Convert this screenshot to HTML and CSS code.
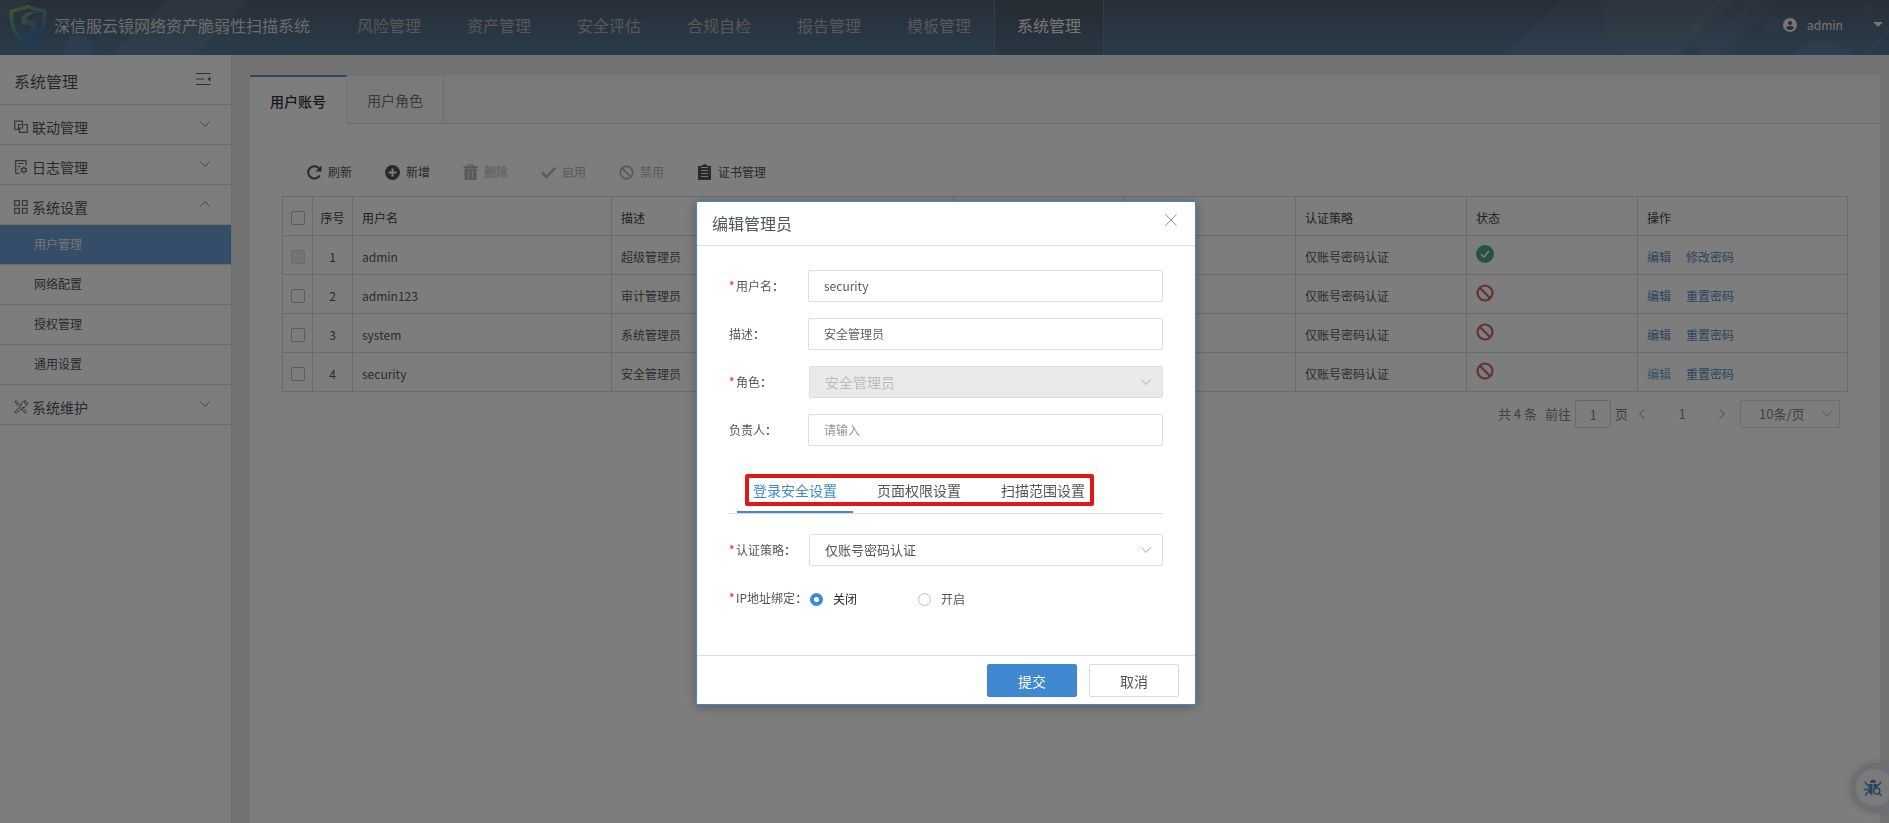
FILE: index.html
```html
<!DOCTYPE html>
<html lang="zh-CN">
<head>
<meta charset="utf-8">
<title>深信服云镜网络资产脆弱性扫描系统</title>
<link rel="stylesheet" href="styles.css">
</head>
<body>
<svg class="sprite" aria-hidden="true">
  <symbol id="down" viewBox="0 0 12 12"><path d="M1.500 3.500 6 8.500 10.500 3.500" fill="none" stroke="currentColor"/></symbol>
  <symbol id="ban" viewBox="0 0 18 18"><circle cx="9" cy="9" r="7.500" fill="none" stroke="currentColor" stroke-width="2.200"/><path d="M4 4 14 14" stroke="currentColor" stroke-width="2.200"/></symbol>
</svg>
<div class="page">
  <header class="header">
    <svg class="deco deco-left" width="260" height="55" viewBox="0 0 260 55" aria-hidden="true">
      <path d="M165 0H250L195 55H110Z" fill="#fff" fill-opacity=".06"/><circle cx="78" cy="49" r="14" fill="#6aa0dc" fill-opacity=".2"/><path d="M0 0H28Q18 16 0 21Z" fill="#fff" fill-opacity=".05"/>
    </svg>
    <svg class="deco deco-right" width="389" height="55" viewBox="1500 0 389 55" aria-hidden="true">
      <g fill="#fff" fill-opacity=".04"><path d="M1560 0H1722L1678 55H1505Z"/><path d="M1608 0H1735L1678 55H1622Q1598 27 1608 0Z"/><path d="M1718 0H1779L1725 55H1701Q1683 34 1700 17Z"/><circle cx="1771" cy="24" r="9"/><circle cx="1868" cy="8" r="7"/><circle cx="1682" cy="-2" r="7"/></g>
      <circle cx="1823" cy="75" r="34" fill="#7aa8dc" fill-opacity=".18"/>
      <path d="M1755 0 1700 55M1889 31 1865 55" stroke="#8ab0d8" stroke-opacity=".3"/>
    </svg>
    <div class="brand">
      <svg width="38" height="42" viewBox="0 0 38 42" aria-hidden="true">
        <defs><linearGradient id="lg" x1="0" y1="0" x2=".5" y2="1"><stop offset="0" stop-color="#8ab860"/><stop offset=".45" stop-color="#609c98"/><stop offset="1" stop-color="#3878b8"/></linearGradient></defs>
        <path d="M19 2.500Q27 6 35.500 7Q37 31 19 40Q1 31 2.500 7Q11 6 19 2.500Z" fill="none" stroke="url(#lg)" stroke-width="3.500"/>
        <path d="M31 8Q13 6 12 17Q12 22 19 21Q24 20 22 25Q19 31 9 31Q18 38 25 29Q31 19 23 17Q17 17 18 14Q21 9 31 8Z" fill="url(#lg)"/>
      </svg>
      <span>深信服云镜网络资产脆弱性扫描系统</span>
    </div>
    <nav class="nav">
      <a href="#">风险管理</a><a href="#">资产管理</a><a href="#">安全评估</a><a href="#">合规自检</a><a href="#">报告管理</a><a href="#">模板管理</a><a href="#" class="on">系统管理</a>
    </nav>
    <button class="account" type="button">
      <svg width="14" height="14" viewBox="0 0 14 14" aria-hidden="true"><circle cx="7" cy="7" r="7" fill="#eee"/><circle cx="7" cy="5" r="2.100" fill="#4e5f72"/><path d="M3 10Q3.500 8 7 8T11 10Q9.500 12 7 12T3 10Z" fill="#4e5f72"/></svg>
      <span class="who">admin</span>
      <svg width="10" height="6" viewBox="0 0 10 6" aria-hidden="true"><path d="M0 0H10L5 5Z" fill="#eee"/></svg>
    </button>
  </header>
  <div class="body">
    <aside class="side">
      <div class="side-title"><span>系统管理</span>
        <svg width="15" height="12" viewBox="0 0 15 12" aria-hidden="true"><path d="M0 .5H14.500M0 6H8.500M0 11.500H14.500" stroke="#5a5e62"/><path d="M14.500 3.500V8.500L11.500 6Z" fill="#5a5e62"/></svg>
      </div>
      <a class="group" href="#"><svg width="14" height="14" viewBox="0 0 14 14"><path d="M4 9.500H.7V1.200H8.500V8H5.500M5.500 9.500H4.500V4.500H7.500M9.500 4.500H13.300V12.300H5.500V8" fill="none" stroke="currentColor" stroke-width="1.200"/></svg><span>联动管理</span><svg class="chev" width="12" height="12"><use href="#down"/></svg></a>
      <a class="group" href="#"><svg width="14" height="14" viewBox="0 0 14 14"><path d="M5.500 13.300H1.700V.7H12V5.500M4 3.500H9.500M4 6.500H6.500M3.500 9.500H4.500" fill="none" stroke="currentColor" stroke-width="1.200"/><circle cx="9.800" cy="10" r="2.200" fill="none" stroke="currentColor" stroke-width="1.200"/><path d="M9.800 6.500V8M9.800 12V13.500M6.700 8.200 8 9M11.600 11 12.900 11.800M6.700 11.800 8 11M11.600 9 12.900 8.200" stroke="currentColor" stroke-width="1.200"/></svg><span>日志管理</span><svg class="chev" width="12" height="12"><use href="#down"/></svg></a>
      <a class="group" href="#"><svg width="14" height="14" viewBox="0 0 14 14"><path d="M.7.7H5.400V5.400H.7ZM8.400.7H13.100V5.400H8.400ZM.7 8.400H5.400V13.100H.7ZM8.400 8.400H13.100V13.100H8.400Z" fill="none" stroke="currentColor" stroke-width="1.200"/></svg><span>系统设置</span><svg class="chev up" width="12" height="12"><use href="#down"/></svg></a>
      <a class="sub on" href="#">用户管理</a>
      <a class="sub" href="#">网络配置</a>
      <a class="sub" href="#">授权管理</a>
      <a class="sub" href="#">通用设置</a>
      <a class="group" href="#"><svg width="14" height="14" viewBox="0 0 14 14"><path d="M1 1.500 2.300.7 7 6M8.500 8 12.800 11.800 11.300 13.200 7.200 9M1 1.500 4.500 6.500M.8 11.800 6.800 6.300Q6.800 1 12 .8L10.300 3 11.500 4.200 13.300 2.600Q13 7.500 8.200 7.700L2.300 13.200Z" fill="none" stroke="currentColor"/></svg><span>系统维护</span><svg class="chev" width="12" height="12"><use href="#down"/></svg></a>
    </aside>
    <main class="main">
      <div class="tabs"><button type="button" class="on">用户账号</button><button type="button">用户角色</button></div>
      <div class="content">
        <div class="tools">
          <button type="button"><svg width="15" height="15" viewBox="0 0 15 15"><path d="M12.800 10.500A6.200 6.200 0 1 1 12 3.200" fill="none" stroke="currentColor" stroke-width="2"/><path d="M14.500.5V6.500H8.500Z" fill="currentColor"/></svg>刷新</button>
          <button type="button"><svg width="15" height="15" viewBox="0 0 15 15"><circle cx="7.500" cy="7.500" r="7.500" fill="currentColor"/><path d="M7.500 3.500V11.500M3.500 7.500H11.500" stroke="#fff" stroke-width="2"/></svg>新增</button>
          <button type="button" disabled><svg width="15" height="16" viewBox="0 0 15 16"><path d="M.5 2H4.500V0H10.500V2H14.500V4H.5ZM1.500 4.500H13.500V16H1.500Z" fill="currentColor"/><path d="M5.500 6.500V14M9.500 6.500V14M5.500 1.500H9.500" stroke="#eee"/></svg>删除</button>
          <button type="button" disabled><svg width="15" height="15" viewBox="0 0 15 15"><path d="M1 7.500 5.500 12 14.500 2.500" fill="none" stroke="currentColor" stroke-width="2.500"/></svg>启用</button>
          <button type="button" disabled><svg width="15" height="15"><use href="#ban"/></svg>禁用</button>
          <button type="button"><svg width="15" height="16" viewBox="0 0 15 16"><path d="M1 2H4.500V1H6Q7.500-1 9 1H10.500V2H14V16H1Z" fill="currentColor"/><path d="M4 3.500H11M4 6.500H11M4 9.500H11M4 12.500H11" stroke="#eee"/></svg>证书管理</button>
        </div>
        <table class="grid">
          <colgroup><col class="c-check"><col class="c-no"><col class="c-name"><col><col class="c-mid"><col class="c-mid"><col class="c-mid"><col class="c-mid"><col class="c-op"></colgroup>
          <thead><tr><th class="mid"><input type="checkbox" aria-label="全选"></th><th class="mid">序号</th><th>用户名</th><th>描述</th><th></th><th></th><th>认证策略</th><th>状态</th><th>操作</th></tr></thead>
          <tbody>
            <tr><td class="mid"><input type="checkbox" aria-label="admin" disabled></td><td class="mid">1</td><td>admin</td><td>超级管理员</td><td></td><td></td><td>仅账号密码认证</td><td><svg class="state" width="18" height="18" viewBox="0 0 18 18"><circle cx="9" cy="9" r="9" fill="#4fa68a"/><path d="M5 9.500 8 12 13 6" fill="none" stroke="#fff" stroke-width="1.500"/></svg></td><td><a href="#">编辑</a><a href="#">修改密码</a></td></tr>
            <tr><td class="mid"><input type="checkbox" aria-label="admin123"></td><td class="mid">2</td><td>admin123</td><td>审计管理员</td><td></td><td></td><td>仅账号密码认证</td><td><svg class="state no" width="18" height="18"><use href="#ban"/></svg></td><td><a href="#">编辑</a><a href="#">重置密码</a></td></tr>
            <tr><td class="mid"><input type="checkbox" aria-label="system"></td><td class="mid">3</td><td>system</td><td>系统管理员</td><td></td><td></td><td>仅账号密码认证</td><td><svg class="state no" width="18" height="18"><use href="#ban"/></svg></td><td><a href="#">编辑</a><a href="#">重置密码</a></td></tr>
            <tr><td class="mid"><input type="checkbox" aria-label="security"></td><td class="mid">4</td><td>security</td><td>安全管理员</td><td></td><td></td><td>仅账号密码认证</td><td><svg class="state no" width="18" height="18"><use href="#ban"/></svg></td><td><a href="#" class="hot">编辑</a><a href="#">重置密码</a></td></tr>
          </tbody>
        </table>
        <div class="pager">
          <span>共 4 条</span>
          <label class="jump">前往 <input type="text" value="1"> 页</label>
          <div class="steps">
            <button type="button" aria-label="上一页"><svg class="left" width="12" height="12"><use href="#down"/></svg></button>
            <button type="button" class="cur">1</button>
            <button type="button" aria-label="下一页"><svg class="right" width="12" height="12"><use href="#down"/></svg></button>
          </div>
          <div class="pick size"><select aria-label="每页条数"><option>10条/页</option></select><svg width="12" height="12"><use href="#down"/></svg></div>
        </div>
      </div>
    </main>
  </div>
  <button class="float" type="button" aria-label="漏洞检测"><span>
    <svg width="18" height="18" viewBox="0 0 18 18"><path d="M6 4Q6 .5 9 .5T12 4ZM4.500 5H8.500V16.500Q4.500 15 4.500 11ZM9.500 5H13.500V8.500Q9.500 8.500 9.500 14Z" fill="#5a8cc0"/><path d="M1.500 2.500V4L4.500 7M0 10.500H4.500M2 17V15L5 12M16.500 2.500V4L13.500 7" fill="none" stroke="#5a8cc0" stroke-width="1.500"/><circle cx="12.800" cy="12" r="3" fill="none" stroke="#5a8cc0" stroke-width="1.400"/><path d="M15 14 17.500 17" stroke="#5a8cc0" stroke-width="1.500"/></svg></span>
  </button>
</div>

<div class="mask">
  <section class="modal" role="dialog" aria-labelledby="dlg">
    <header class="modal-head"><h2 id="dlg">编辑管理员</h2><button type="button" aria-label="关闭"><svg width="12" height="12" viewBox="0 0 12 12"><path d="M.5.5 11.500 11.500M11.500.5.5 11.500" stroke="#909399"/></svg></button></header>
    <form class="form">
      <div class="field"><label for="user"><i>*</i>用户名<b>：</b></label><input id="user" type="text" value="security"></div>
      <div class="field"><label for="desc">描述<b>：</b></label><input id="desc" type="text" value="安全管理员"></div>
      <div class="field"><label for="role"><i>*</i>角色<b>：</b></label><div class="pick big"><select id="role" disabled><option>安全管理员</option></select><svg width="12" height="12"><use href="#down"/></svg></div></div>
      <div class="field"><label for="owner">负责人<b>：</b></label><input id="owner" type="text" placeholder="请输入"></div>
      <div class="subtabs">
        <button type="button" class="on">登录安全设置</button><button type="button">页面权限设置</button><button type="button">扫描范围设置</button>
        <span class="frame"></span>
      </div>
      <div class="field"><label for="auth"><i>*</i>认证策略<b>：</b></label><div class="pick"><select id="auth"><option>仅账号密码认证</option></select><svg width="12" height="12"><use href="#down"/></svg></div></div>
      <div class="field"><span class="label"><i>*</i>IP地址绑定<b>：</b></span>
        <div class="radios">
          <label class="radio dark"><input type="radio" name="ip" checked>关闭</label>
          <label class="radio"><input type="radio" name="ip">开启</label>
        </div>
      </div>
    </form>
    <footer class="modal-foot"><button type="button" class="btn primary">提交</button><button type="button" class="btn">取消</button></footer>
  </section>
</div>
</body>
</html>
```
FILE: styles.css
```css
* { box-sizing: border-box; }
body { margin: 0; font: 12px/20px "Noto Sans CJK SC", "Noto Sans", sans-serif; color: #50565c; }
button, input, select { font: inherit; color: inherit; margin: 0; }
button { background: none; border: 0; padding: 0; }
a { color: inherit; text-decoration: none; }
svg { display: block; flex: none; }
.sprite { position: absolute; width: 0; height: 0; }
.page { min-height: 100vh; display: flex; flex-direction: column; background: #ebebeb; overflow: hidden; }

/* Header */
.header { position: relative; display: flex; height: 55px; background: linear-gradient(#4f5f71, #587a9b); color: #eee; }
.deco { position: absolute; top: 0; }
.deco-left { left: 0; }
.deco-right { right: 0; }
.brand, .nav, .account { position: relative; }
.brand { display: flex; align-items: center; gap: 7px; width: 334px; padding: 0 0 5px 9px; font-size: 16px; color: #dcdcdc; }
.brand svg { opacity: .85; }
.nav { display: flex; font-size: 16px; color: #b0b4b8; }
.nav a { width: 110px; padding-bottom: 6px; display: flex; align-items: center; justify-content: center; }
.nav .on { color: #f0f0f0; background: rgba(70, 70, 70, .2); border: solid #64809c; border-width: 0 1px; }
.account { display: flex; align-items: center; gap: 10px; margin-left: auto; padding: 0 6px 5px 0; }
.who { width: 56px; text-align: left; }

/* Sidebar */
.body { flex: 1; display: flex; gap: 18px; }
.side { width: 232px; flex: none; background: #fff; border-right: 1px solid #e0e0e0; }
.side-title, .group, .sub { display: flex; align-items: center; border-bottom: 1px solid #dcdcdc; }
.side-title { height: 50px; padding: 2px 20px 0 14px; justify-content: space-between; font-size: 16px; }
.side-title svg { margin-bottom: 3px; }
.group { height: 40px; padding: 4px 20px 0 14px; gap: 4px; font-size: 14px; }
.group svg:first-child { color: #6c7074; }
.group .chev { margin: 0 0 6px auto; color: #8a8e94; }
.up { transform: rotate(180deg); }
.sub { height: 40px; padding: 0 0 2px 34px; }
.sub.on { background: #6c9ed2; color: #f0f0f0; }

/* Main panel */
.main { flex: 1; min-width: 0; margin: 20px 9px 0 0; background: #fff; }
.tabs { display: flex; height: 49px; background: #f8f8f8; box-shadow: inset 0 -1px #e0e0e0; font-size: 14px; color: #74787e; }
.tabs button { width: 97px; border: solid #e0e0e0; border-width: 1px 1px 1px 0; }
.tabs .on { background: #fff; color: #303438; font-weight: 500; border-top: 2px solid #5a94cc; border-bottom: 0; }
.content { padding: 38px 32px 0; }
.tools { display: flex; gap: 33px; padding-left: 25px; margin-bottom: 14px; }
.tools button { display: flex; align-items: center; gap: 6px; color: #50545a; }
.tools button:disabled { color: #b8b8b8; }
.grid { width: 100%; table-layout: fixed; border-collapse: collapse; color: #555b61; }
.grid th, .grid td { height: 39px; border: 1px solid #dadada; padding: 3px 8px 0 9px; text-align: left; vertical-align: middle; font-weight: 400; }
.grid th { color: #40444a; }
.grid .mid { text-align: center; padding: 3px 0 0; }
.c-check { width: 30px; }
.c-no { width: 40px; }
.c-name { width: 259px; }
.c-mid { width: 171px; }
.c-op { width: 210px; }
.grid input { appearance: none; display: block; width: 14px; height: 14px; margin: 0 auto; border: 1px solid #b8bcc0; border-radius: 2px; }
.grid input:disabled { background: #ececec; border-color: #dadada; }
.grid a { margin-right: 15px; color: #5c8abc; }
.grid .hot { color: #78a8d8; }
.state { margin-bottom: 5px; }
.no { color: #cc6864; }
.pager { display: flex; justify-content: flex-end; align-items: center; gap: 8px; margin: 8px 8px 0 0; font-size: 13px; color: #82868c; }
.jump { display: flex; align-items: center; gap: 4px; }
.jump input { width: 36px; height: 28px; border: 1px solid #d4d6da; border-radius: 2px; text-align: center; background: #fff; padding: 0; }
.steps { display: flex; width: 92px; justify-content: space-between; align-items: center; color: #94989e; }
.steps .cur { color: #5a94d0; }
.left { transform: rotate(90deg); }
.right { transform: rotate(-90deg); }
.pick { position: relative; flex: 1; }
.pick select { appearance: none; width: 100%; height: 32px; border: 1px solid #dcdee2; border-radius: 2px; background: #fff; padding: 0 30px 0 15px; font-size: 13px; opacity: 1; }
.pick svg { position: absolute; right: 11px; top: 10px; color: #a8abb0; pointer-events: none; }
.pick.size { flex: none; width: 100px; margin-left: 4px; }
.size select { height: 28px; padding: 0 18px; }
.size svg { top: 8px; right: 7px; }

.float { position: fixed; right: 0; bottom: 11px; width: 39px; height: 49px; padding: 6px; border-radius: 25px 0 0 25px; background: #dce4ec; box-shadow: 0 0 8px rgba(0, 0, 0, .15); overflow: hidden; }
.float span { display: flex; align-items: center; width: 37px; height: 37px; padding-left: 8px; border-radius: 50%; background: #f8f8f8; }

/* Dialog */
.mask { position: fixed; inset: 0; padding: 201px 0 0 3px; background: rgba(0, 0, 0, .51); }
.modal { width: 500px; margin: 0 auto; background: #fff; border: 1px solid #3f88d0; border-radius: 2px; box-shadow: 0 2px 12px rgba(0, 0, 0, .3); }
.modal-head { display: flex; align-items: center; justify-content: space-between; height: 44px; padding: 0 18px 2px 15px; border-bottom: 1px solid #dcdcdc; }
.modal-head h2 { margin: 0; font-size: 16px; font-weight: 400; }
.modal-head button { margin-bottom: 5px; }
.form { display: flex; flex-direction: column; gap: 16px; padding: 24px 32px 41px; }
.field { display: flex; align-items: center; height: 32px; }
.field > label, .label { width: 79px; flex: none; white-space: nowrap; }
.field i { display: inline-block; width: 7px; color: #f02020; font-style: normal; }
.field b { font-family: "Noto Sans CJK TC", sans-serif; font-weight: 500; }
.field > input { flex: 1; min-width: 0; height: 32px; border: 1px solid #dcdee2; border-radius: 2px; padding: 0 15px 2px; outline: 0; color: #5c5c5c; }
.field > input::placeholder { color: #949494; }
.field .pick { margin-left: 1px; }
.big select { font-size: 14px; background: #eaeaea; color: #b8bcc2; }
.subtabs { position: relative; display: flex; gap: 8px; margin: 12px 0 4px; padding-left: 8px; height: 40px; border-bottom: 1px solid #dcdcdc; font-size: 14px; }
.subtabs button { height: 39px; padding: 0 16px 6px; border-bottom: 2px solid transparent; }
.subtabs .on { color: #4088d0; border-bottom-color: #4088d0; }
.frame { position: absolute; left: 16px; top: 0; width: 349px; height: 32px; border: 4px solid #e01818; border-radius: 2px; pointer-events: none; }
.radios { display: flex; padding: 2px 0 0 2px; }
.radio { display: flex; align-items: center; gap: 10px; width: 108px; }
.dark { color: #202428; }
.radio input { appearance: none; width: 13px; height: 13px; border: 1px solid #bcbfc4; border-radius: 50%; background: #fff; }
.radio input:checked { border: 4px solid #4088d0; }
.modal-foot { display: flex; justify-content: flex-end; gap: 12px; padding: 8px 16px 7px; border-top: 1px solid #dcdcdc; }
.btn { width: 90px; height: 33px; border: 1px solid #d8dadd; border-radius: 2px; font-size: 14px; }
.primary { background: #4088d0; border-color: #4088d0; color: #fff; }
```
